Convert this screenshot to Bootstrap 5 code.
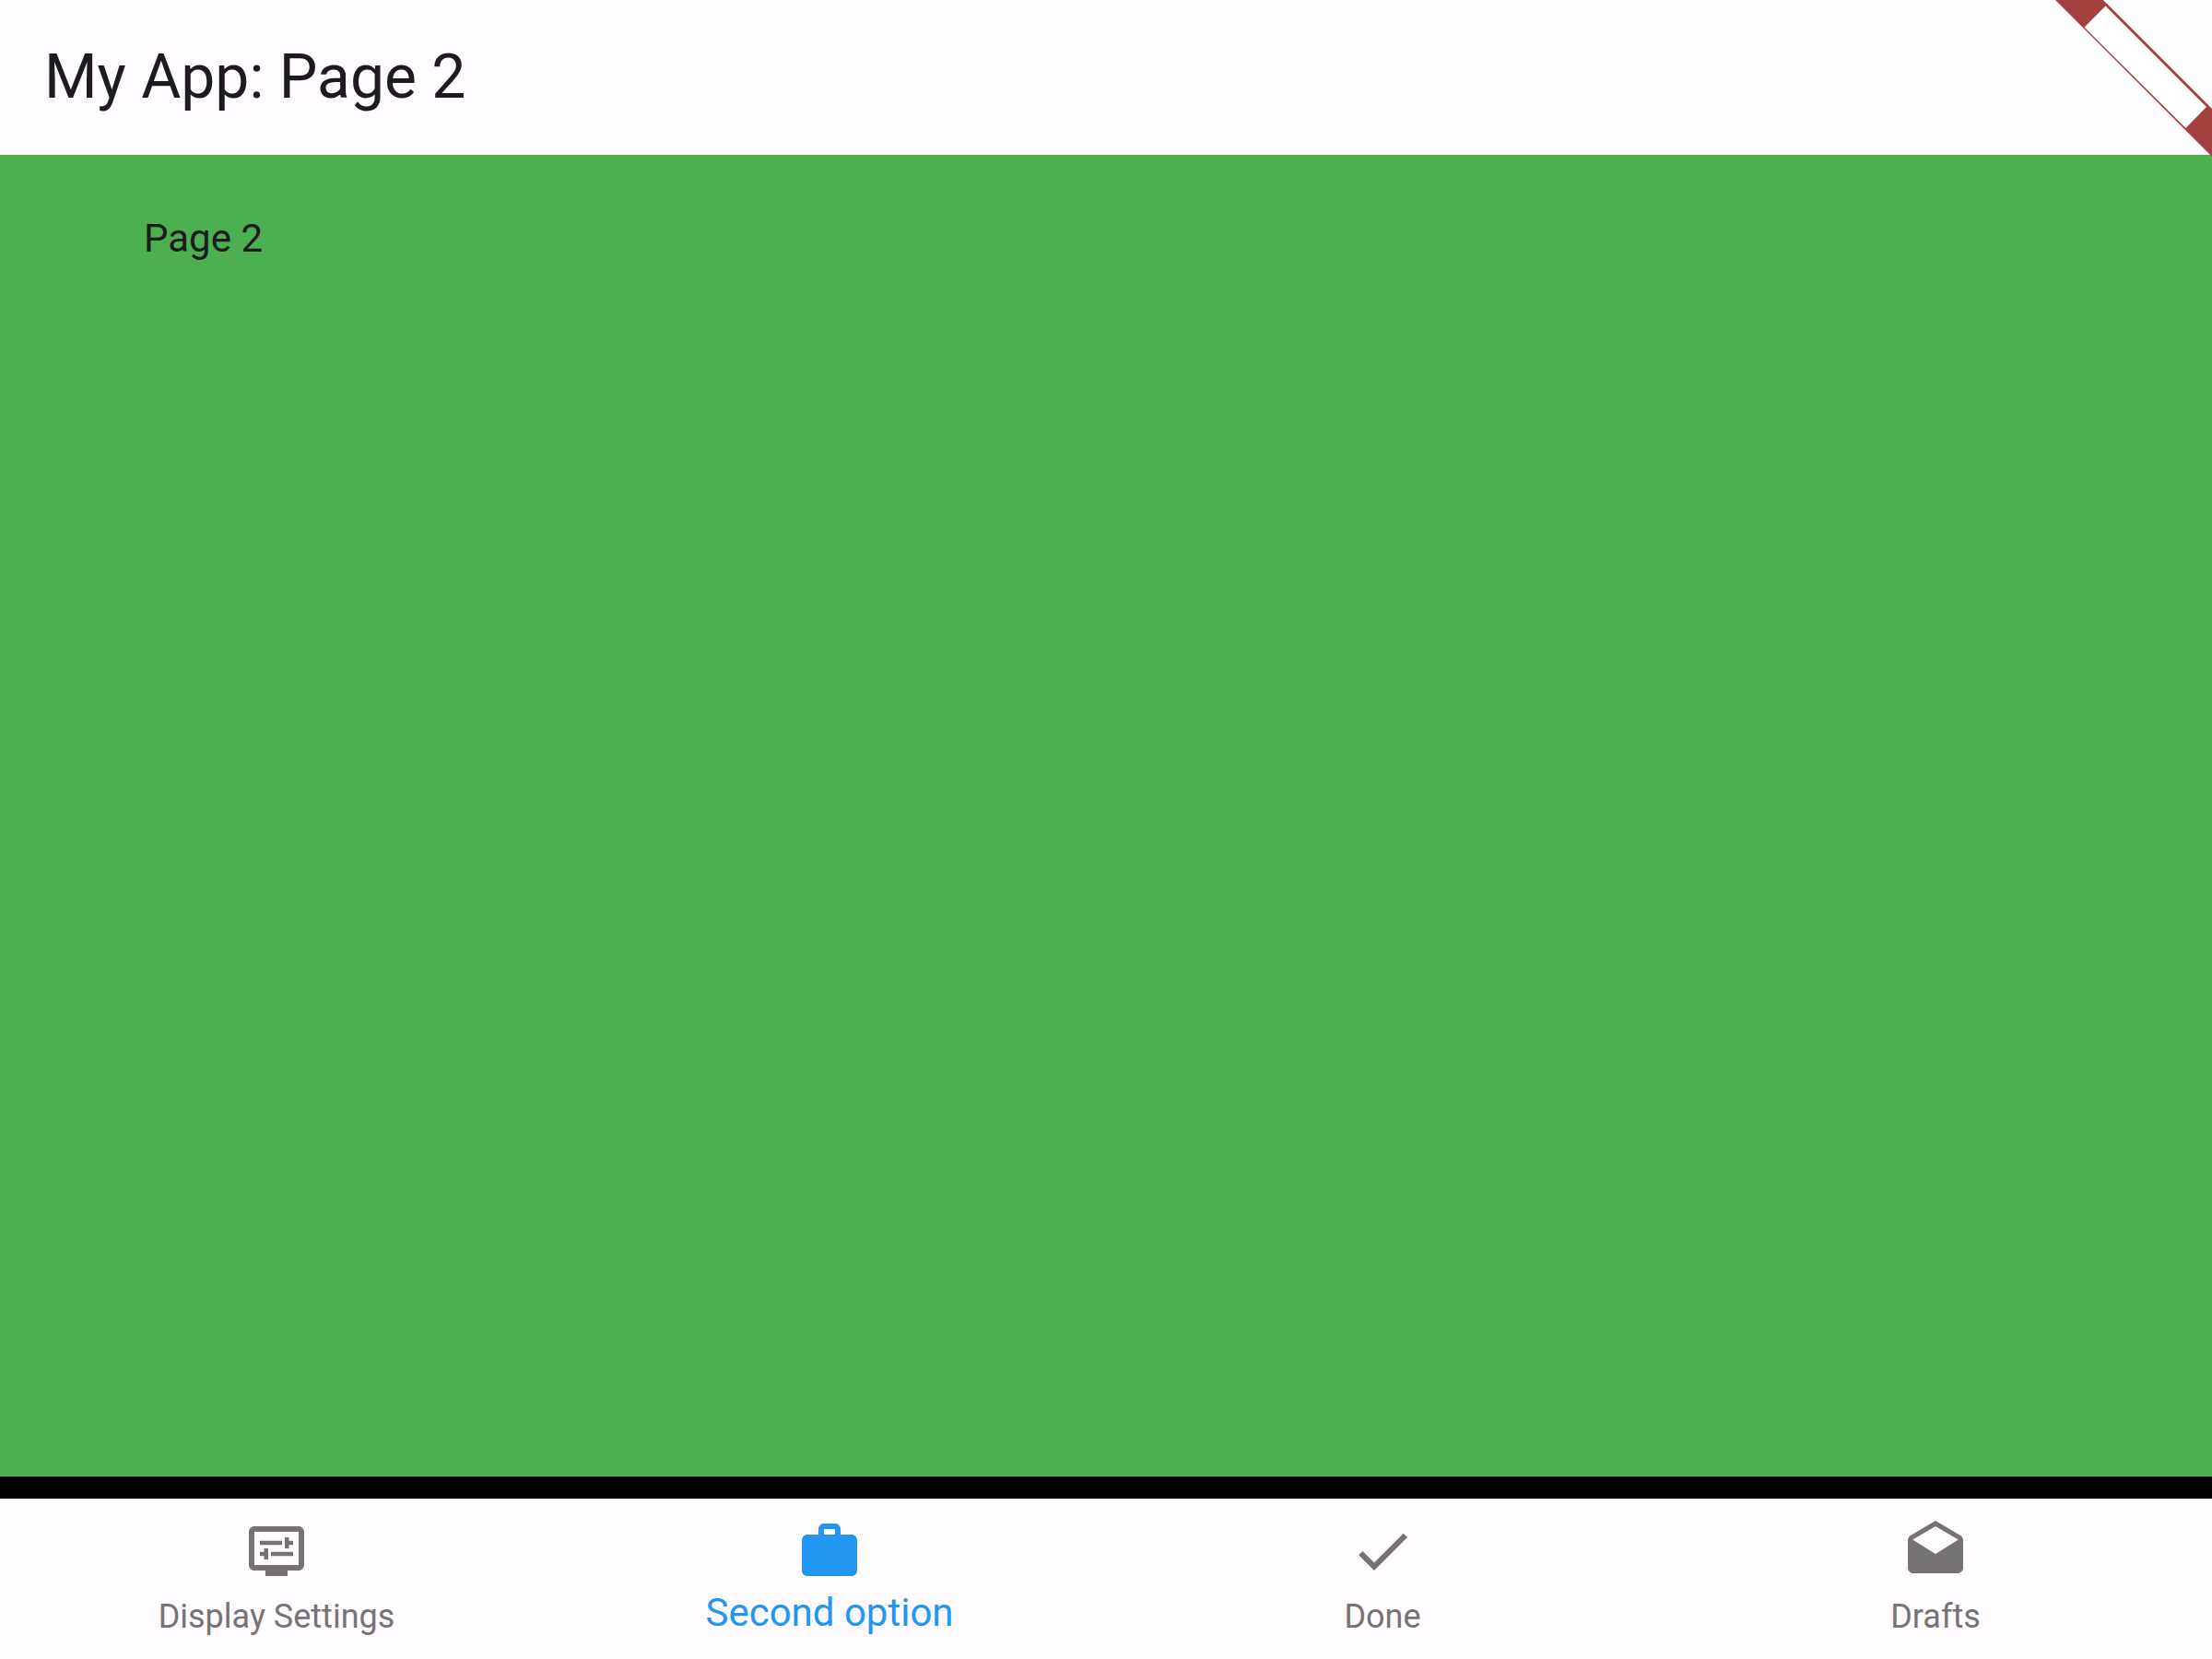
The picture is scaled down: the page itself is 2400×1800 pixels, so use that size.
<!DOCTYPE html>
<html lang="en">
<head>
<meta charset="utf-8">
<meta name="viewport" content="width=device-width, initial-scale=1">
<title>My App: Page 2</title>
<link href="https://cdn.jsdelivr.net/npm/bootstrap@5.3.0/dist/css/bootstrap.min.css" rel="stylesheet">
<style>
  body { font-family: Roboto, sans-serif; background: #fffbff; color: #1c1b1f; }
  .app-bar { height: 168px; padding: 0 48px; }
  .app-title { font-size: 66px; line-height: 84px; font-weight: 400; }
  .debug-ribbon { width: 170px; height: 170px; }
  .page-body { background: #4caf50; padding: 61px 156px; font-size: 42px; line-height: 60px; }
  .divider-band { height: 24px; background: #000; }
  .bottom-bar { background: #fffbff; }
  .tab-link { height: 174px; padding: 21px 0 20px; color: #757375; font-size: 36px; line-height: 52px; text-decoration: none; }
  .tab-link.active { color: #2196f3; font-size: 42px; line-height: 60px; }
  .tab-link svg { width: 72px; height: 72px; fill: currentColor; }
</style>
<script src="https://cdn.jsdelivr.net/npm/bootstrap@5.3.0/dist/js/bootstrap.bundle.min.js"></script>
</head>
<body class="d-flex flex-column min-vh-100 position-relative">
  <header class="app-bar d-flex align-items-center">
    <h1 class="app-title m-0">My App: Page 2</h1>
  </header>
  <svg class="debug-ribbon position-absolute top-0 end-0" viewBox="0 0 170 170" aria-hidden="true">
    <path fill="#a34040" d="M0 0H52L170 118V170Z"/>
    <path fill="#fff" d="M54.500 6.500L164 116L141.500 139L31.500 29.500Z"/>
  </svg>
  <main class="page-body flex-grow-1">
    <p class="m-0">Page 2</p>
  </main>
  <div class="divider-band"></div>
  <nav class="bottom-bar" aria-label="Pages">
    <div class="row g-0 text-center">
      <div class="col">
        <a href="#" class="tab-link d-flex flex-column align-items-center justify-content-between">
          <svg viewBox="0 0 24 24" aria-hidden="true"><path fill-rule="evenodd" d="M20 3H4C2.900 3 2 3.900 2 5V17C2 18.100 2.900 19 4 19H8V21H16V19H20C21.100 19 22 18.100 22 17V5C22 3.900 21.100 3 20 3ZM20 17H4V5H20ZM6 8.250H14V9.750H6ZM16.500 9.750H18V8.250H16.500V7H15V11H16.500ZM10 12.250H18V13.750H10ZM7.500 15H9V11H7.500V12.250H6V13.750H7.500Z"/></svg>
          <span>Display Settings</span>
        </a>
      </div>
      <div class="col">
        <a href="#" class="tab-link active d-flex flex-column align-items-center justify-content-between" aria-current="page">
          <svg viewBox="0 0 24 24" aria-hidden="true"><path fill-rule="evenodd" d="M10 2H14C15.100 2 16 2.900 16 4V6H20C21.100 6 22 6.900 22 8V19C22 20.100 21.100 21 20 21H4C2.900 21 2 20.100 2 19V8C2 6.900 2.900 6 4 6H8V4C8 2.900 8.900 2 10 2ZM10 4V6H14V4Z"/></svg>
          <span>Second option</span>
        </a>
      </div>
      <div class="col">
        <a href="#" class="tab-link d-flex flex-column align-items-center justify-content-between">
          <svg viewBox="0 0 24 24" aria-hidden="true"><path d="M9 16.170L4.830 12L3.410 13.410L9 19L21 7L19.590 5.590Z"/></svg>
          <span>Done</span>
        </a>
      </div>
      <div class="col">
        <a href="#" class="tab-link d-flex flex-column align-items-center justify-content-between">
          <svg viewBox="0 0 24 24" aria-hidden="true"><path fill-rule="evenodd" d="M21.990 8C21.990 7.280 21.620 6.650 21.050 6.300L12 1L2.950 6.300C2.380 6.650 2 7.280 2 8V18C2 19.100 2.900 20 4 20H20C21.100 20 22 19.100 22 18ZM12 13L3.740 7.840L12 3L20.260 7.840Z"/></svg>
          <span>Drafts</span>
        </a>
      </div>
    </div>
  </nav>
</body>
</html>
